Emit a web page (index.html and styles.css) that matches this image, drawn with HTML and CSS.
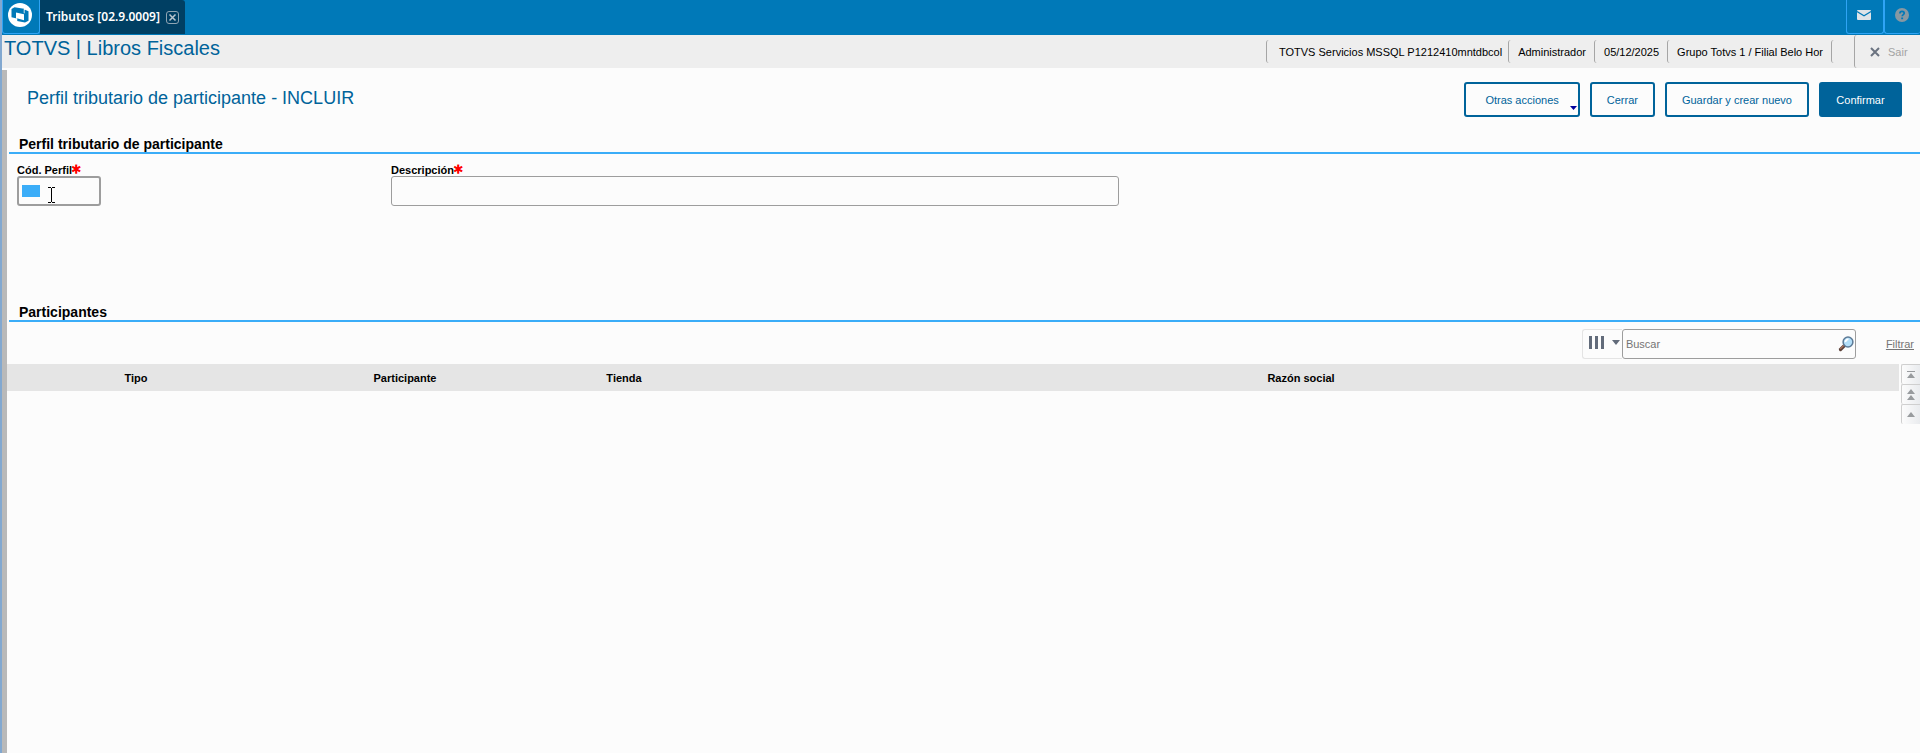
FILE: index.html
```html
<!DOCTYPE html>
<html lang="es">
<head>
<meta charset="utf-8">
<title>TOTVS | Libros Fiscales</title>
<link rel="stylesheet" href="styles.css">
</head>
<body>
<div class="window">
  <nav class="topbar">
    <button class="home" aria-label="Inicio">
      <svg width="24" height="24" viewBox="0 0 24 24">
        <circle cx="12" cy="12" r="12" fill="#fff"/>
        <path d="M3.500 6 6.500 4.200l9.500 1.600v8.700L12 16.200l-8.500-2z" fill="#0079b8"/>
        <path d="M9 8.500l8-1.700 3.500 1.400v9.600l-3.500 1.700-8-1.600z" fill="#0079b8"/>
        <path d="M16.200 5.800v4.500" stroke="#fff" stroke-width=".8"/>
        <path d="M8.800 14.500V19" stroke="#fff" stroke-width=".8"/>
        <path d="M8 9.500l8 1.800v6L8 15z" fill="#fff"/>
      </svg>
    </button>
    <div class="tab">
      <span>Tributos [02.9.0009]</span>
      <button class="tab-close" aria-label="Cerrar pestaña">
        <svg width="13" height="13" viewBox="0 0 13 13" fill="none" stroke="#8fa5b3"><rect x=".5" y=".5" width="12" height="12" rx="2.500"/><path d="M3.500 3.500l6 6M9.500 3.500l-6 6" stroke="#b9c6cf" stroke-width="1.500"/></svg>
      </button>
    </div>
    <div class="top-actions">
      <button class="top-action" aria-label="Mensajes">
        <svg width="14" height="10" viewBox="0 0 14 10"><rect width="14" height="10" rx="1" fill="#dde3e8"/><path d="M0 1.500l7 4.300 7-4.300" fill="none" stroke="#0079b8" stroke-width="1.200"/></svg>
      </button>
      <button class="top-action" aria-label="Ayuda">
        <svg width="14" height="14" viewBox="0 0 14 14"><circle cx="7" cy="7" r="7" fill="#8798a2"/><path d="M4.900 5.500c0-1.400.9-2.100 2.100-2.100s2.200.7 2.200 1.900c0 1.300-2 1.400-2 3" fill="none" stroke="#0079b8" stroke-width="1.700"/><rect x="6.200" y="9.500" width="1.900" height="1.700" fill="#0079b8"/></svg>
      </button>
    </div>
  </nav>

  <header class="header">
    <h1 class="app-title">TOTVS | Libros Fiscales</h1>
    <div class="status">
      <span class="status-item status-env">TOTVS Servicios MSSQL P1212410mntdbcol</span>
      <span class="status-item">Administrador</span>
      <span class="status-item">05/12/2025</span>
      <span class="status-item">Grupo Totvs 1 / Filial Belo Hor</span>
      <span class="status-item status-blank"></span>
      <button class="exit">
        <svg width="10" height="10" viewBox="0 0 10 10"><path d="M1 1l8 8M9 1l-8 8" stroke="#6b7380" stroke-width="2"/></svg>
        Sair
      </button>
    </div>
  </header>

  <main class="main">
    <div class="page-head">
      <h2 class="page-title">Perfil tributario de participante - INCLUIR</h2>
      <div class="buttons">
        <button class="btn btn-menu">Otras acciones
          <svg class="caret" width="7" height="4" viewBox="0 0 7 4"><path d="M0 0h7L3.500 4z" fill="#00009c"/></svg>
        </button>
        <button class="btn">Cerrar</button>
        <button class="btn">Guardar y crear nuevo</button>
        <button class="btn btn-primary">Confirmar</button>
      </div>
    </div>

    <section class="profile">
      <h3 class="section-title">Perfil tributario de participante</h3>
      <div class="fields">
        <div class="field field-code">
          <label for="code">Cód. Perfil<span class="required">*</span></label>
          <div class="code-box">
            <input id="code" class="input input-code" type="text">
            <span class="selection"></span>
            <svg class="ibeam" width="7" height="16" viewBox="0 0 7 16"><path d="M0 .5h3M4 .5h3M0 15.500h3M4 15.500h3M3.500 1v14" stroke="#000"/></svg>
          </div>
        </div>
        <div class="field">
          <label for="desc">Descripción<span class="required">*</span></label>
          <input id="desc" class="input" type="text">
        </div>
      </div>
    </section>

    <section>
      <h3 class="section-title">Participantes</h3>
      <div class="toolbar">
        <button class="columns" aria-label="Columnas">
          <svg width="32" height="14" viewBox="0 0 32 14" fill="#626b7a"><path d="M0 0h3v13H0zM6 0h3v13H6zM12 0h3v13h-3zM23 4h8l-4 5z"/></svg>
        </button>
        <div class="search">
          <input class="search-input" type="text" placeholder="Buscar" aria-label="Buscar">
          <svg class="lens" width="16" height="16" viewBox="0 0 16 16">
            <path d="M2.500 13.500l4-4" stroke="#5b4038" stroke-width="3.200" stroke-linecap="round"/>
            <path d="M2.600 12.600l3-3" stroke="#b0755c" stroke-width="1.200" stroke-linecap="round"/>
            <circle cx="10" cy="6" r="4.900" fill="#b3def8" stroke="#5d7a96" stroke-width="1.500"/>
            <path d="M7.500 6.200a2.600 2.600 0 0 1 3-2.800" fill="none" stroke="#fff" stroke-width="1.800"/>
          </svg>
        </div>
        <a class="filter" href="#">Filtrar</a>
      </div>
      <div class="grid">
        <table class="table">
          <colgroup><col class="col-type"><col class="col-part"><col class="col-store"><col></colgroup>
          <thead><tr><th>Tipo</th><th>Participante</th><th>Tienda</th><th>Razón social</th></tr></thead>
          <tbody></tbody>
        </table>
        <div class="scroller">
          <button class="scroll" aria-label="Primero"><svg width="8" height="8" viewBox="0 0 8 8" fill="#989b9e"><path d="M0 0h8v1H0zM4 2l4 5H0z"/></svg></button>
          <button class="scroll" aria-label="Página anterior"><svg width="8" height="11" viewBox="0 0 8 11" fill="#989b9e"><path d="M4 0l4 5H0zM4 6l4 5H0z"/></svg></button>
          <button class="scroll" aria-label="Anterior"><svg width="8" height="5" viewBox="0 0 8 5" fill="#989b9e"><path d="M4 0l4 5H0z"/></svg></button>
        </div>
      </div>
    </section>
  </main>
</div>
</body>
</html>
```
FILE: styles.css
```css
* { box-sizing: border-box; }
body {
  margin: 0;
  background: #fcfcfc;
  color: #000;
  font: 11px/14px "Liberation Sans", Arial, sans-serif;
}
button, input { font: inherit; margin: 0; }
button { padding: 0; border: 0; background: none; }
svg { display: block; flex: none; }
h1, h2, h3 { margin: 0; }

.window {
  display: flex;
  flex-direction: column;
  min-height: 100vh;
  border-left: 2px solid #82a8d0;
}

.topbar { display: flex; height: 35px; background: #0079b8; }
.home {
  display: flex;
  justify-content: center;
  align-items: center;
  width: 38px;
  height: 34px;
  padding: 0 2px 4px 0;
  border: 1px solid #2fa4f5;
  border-top: 0;
  border-radius: 0 0 3px 3px;
}
.tab {
  display: flex;
  align-items: center;
  gap: 6px;
  height: 34px;
  padding: 0 6px;
  border-radius: 0 3px 0 0;
  background: #003f63;
  color: #fff;
  font: 600 12px/16px "Noto Sans", sans-serif;
}
.top-actions { display: flex; margin-left: auto; height: 34px; }
.top-action {
  display: flex;
  justify-content: center;
  align-items: center;
  width: 38px;
  padding: 0 2px 4px 0;
  border: 1px solid #2fa4f5;
  border-top: 0;
  border-radius: 0 0 3px 3px;
}
.top-action:last-child { width: 36px; border-right: 0; }

.header {
  display: flex;
  justify-content: space-between;
  height: 33px;
  background: #eee;
}
.app-title { padding-left: 2px; color: #00639a; font-size: 20px; font-weight: 400; line-height: 26px; }
.status { display: flex; align-items: center; }
.status-item {
  height: 23px;
  padding: 0 8px 0 9px;
  border-left: 1px solid #a5a5a5;
  border-radius: 3px 0 0 3px;
  line-height: 24px;
  white-space: nowrap;
}
.status-env { padding: 0 6px 0 12px; }
.status-blank { width: 23px; padding: 0; }
.exit {
  display: flex;
  align-items: center;
  gap: 8px;
  width: 66px;
  height: 33px;
  padding-left: 15px;
  border-left: 1px solid #a5a5a5;
  border-radius: 3px 0 0 3px;
  color: #a3a3a3;
}

.main { flex: 1; margin-top: 2px; border-left: 5px solid #b9b9b9; }
.page-head {
  display: flex;
  justify-content: space-between;
  padding: 12px 18px 0 20px;
}
.page-title { color: #00639a; font-size: 18px; font-weight: 400; line-height: 33px; }
.buttons { display: flex; gap: 10px; }
.btn {
  position: relative;
  height: 35px;
  padding: 0 15px;
  border: 2px solid #00639a;
  border-radius: 3px;
  background: #fcfcfc;
  color: #00639a;
}
.btn-menu { padding: 0 19px; }
.caret { position: absolute; right: 1px; bottom: 5px; }
.btn-primary { min-width: 83px; background: #00639a; color: #fff; }

.section-title {
  margin-left: 2px;
  padding-left: 10px;
  border-bottom: 2px solid #3badf8;
  font-size: 14px;
  font-weight: 700;
  line-height: 16px;
}
.profile { padding: 19px 0 98px; }
.fields {
  display: grid;
  grid-template-columns: 374px minmax(0, 728px);
  padding: 9px 10px 0;
}
.field label { display: block; height: 13px; font-weight: 700; line-height: 14px; white-space: nowrap; }
.required { color: #f00; font: 400 17px/12px "DejaVu Sans", sans-serif; vertical-align: -4px; -webkit-text-stroke: 1px #f00; }
.input {
  display: block;
  width: 100%;
  height: 30px;
  padding: 0 4px;
  border: 1px solid #9d9d9d;
  border-radius: 3px;
  background: #fcfcfc;
  outline: 0;
}
.code-box { position: relative; width: 84px; }
.input-code { border-width: 2px; }
.selection { position: absolute; left: 5px; top: 9px; width: 18px; height: 12px; background: #3badf8; }
.ibeam { position: absolute; left: 31px; top: 11px; }

.toolbar { display: flex; justify-content: flex-end; padding: 7px 6px 5px; }
.columns {
  display: flex;
  align-items: center;
  width: 40px;
  height: 30px;
  padding: 0 0 2px 6px;
  border: 1px solid #e4e4e4;
  border-right: 0;
  border-radius: 3px 0 0 3px;
}
.search { position: relative; width: 234px; }
.search-input {
  display: block;
  width: 100%;
  height: 30px;
  padding: 0 24px 0 3px;
  border: 1px solid #9d9d9d;
  border-radius: 3px;
  background: #fcfcfc;
}
.search-input::placeholder { color: #757575; opacity: 1; }
.lens { position: absolute; right: 2px; top: 7px; }
.filter { margin-left: 30px; color: #757575; line-height: 30px; }

.grid { display: flex; align-items: flex-start; gap: 2px; }
.table { flex: 1; table-layout: fixed; border-collapse: collapse; }
.table th { height: 27px; padding: 0; background: #e5e5e5; font-weight: 700; }
.col-type { width: 258px; }
.col-part { width: 280px; }
.col-store { width: 158px; }
.scroller { width: 19px; }
.scroll {
  display: flex;
  justify-content: center;
  align-items: center;
  width: 100%;
  height: 20px;
  border: 1px solid #cfcfcf;
  border-width: 1px 0 0 1px;
  border-radius: 2px 0 0 2px;
  background: linear-gradient(90deg, #fcfcfc, #e9ebee);
}
```
